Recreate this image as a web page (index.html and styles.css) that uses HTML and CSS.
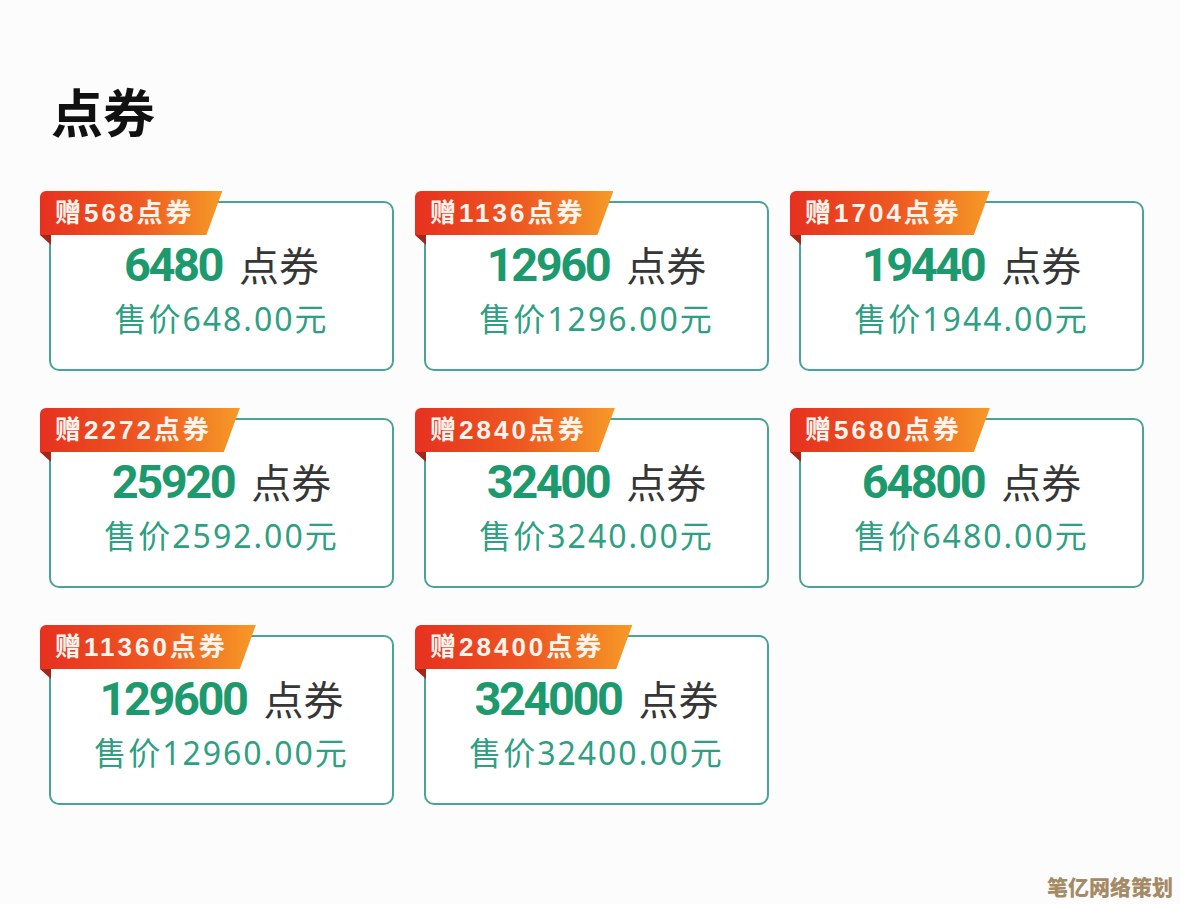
FILE: index.html
```html
<!DOCTYPE html>
<html lang="zh-CN">
<head>
<meta charset="utf-8">
<title>点券</title>
<link rel="stylesheet" href="styles.css">
</head>
<body>
<main class="page">
  <h1 class="title">点券</h1>
  <section class="grid">
    <div class="card">
      <div class="badge"><span class="badge-label">赠568点券</span></div>
      <div class="amount"><span class="num">6480</span><span class="unit">点券</span></div>
      <div class="price">售价648.00元</div>
    </div>
    <div class="card">
      <div class="badge"><span class="badge-label">赠1136点券</span></div>
      <div class="amount"><span class="num">12960</span><span class="unit">点券</span></div>
      <div class="price">售价1296.00元</div>
    </div>
    <div class="card">
      <div class="badge"><span class="badge-label">赠1704点券</span></div>
      <div class="amount"><span class="num">19440</span><span class="unit">点券</span></div>
      <div class="price">售价1944.00元</div>
    </div>
    <div class="card">
      <div class="badge"><span class="badge-label">赠2272点券</span></div>
      <div class="amount"><span class="num">25920</span><span class="unit">点券</span></div>
      <div class="price">售价2592.00元</div>
    </div>
    <div class="card">
      <div class="badge"><span class="badge-label">赠2840点券</span></div>
      <div class="amount"><span class="num">32400</span><span class="unit">点券</span></div>
      <div class="price">售价3240.00元</div>
    </div>
    <div class="card">
      <div class="badge"><span class="badge-label">赠5680点券</span></div>
      <div class="amount"><span class="num">64800</span><span class="unit">点券</span></div>
      <div class="price">售价6480.00元</div>
    </div>
    <div class="card">
      <div class="badge"><span class="badge-label">赠11360点券</span></div>
      <div class="amount"><span class="num">129600</span><span class="unit">点券</span></div>
      <div class="price">售价12960.00元</div>
    </div>
    <div class="card">
      <div class="badge"><span class="badge-label">赠28400点券</span></div>
      <div class="amount"><span class="num">324000</span><span class="unit">点券</span></div>
      <div class="price">售价32400.00元</div>
    </div>
  </section>
  <div class="watermark">笔亿网络策划</div>
</main>
</body>
</html>
```

FILE: styles.css
```css
html, body {
  margin: 0;
  padding: 0;
  background: #fcfcfd;
}

.page {
  position: relative;
  width: 1180px;
  height: 904px;
  box-sizing: border-box;
  padding: 85px 0 0 49px;
  font-family: "Noto Sans", "Noto Sans CJK SC", sans-serif;
  overflow: hidden;
}

.title {
  margin: 0 0 64px 2px;
  font-family: "Noto Sans CJK SC", sans-serif;
  font-size: 52px;
  line-height: 52px;
  font-weight: 700;
  color: #111;
}

.grid {
  display: grid;
  grid-template-columns: repeat(3, 345px);
  grid-auto-rows: 170px;
  column-gap: 30px;
  row-gap: 47px;
}

.card {
  position: relative;
  box-sizing: border-box;
  border: 2px solid #4aa493;
  border-radius: 10px;
  background: #fff;
  display: flex;
  flex-direction: column;
  align-items: center;
  padding-top: 37px;
}

.badge {
  position: absolute;
  left: -11px;
  top: -12px;
  height: 44px;
}

.badge::after {
  content: "";
  position: absolute;
  left: 0;
  top: 100%;
  width: 11px;
  height: 10px;
  background: #a3261a;
  clip-path: polygon(0 0, 100% 0, 100% 100%);
}

.badge-label {
  display: block;
  height: 44px;
  line-height: 44px;
  padding: 0 28px 0 15px;
  border-top-left-radius: 6px;
  background: linear-gradient(90deg, #e6311f 0%, #ee5a22 55%, #f69a27 100%);
  clip-path: polygon(0 0, 100% 0, calc(100% - 16px) 100%, 0 100%);
  color: #fff4ee;
  font-family: "Liberation Sans", "Noto Sans CJK SC", sans-serif;
  font-size: 26px;
  font-weight: 700;
  letter-spacing: 3px;
  white-space: nowrap;
}

.amount {
  display: flex;
  align-items: baseline;
  height: 48px;
  line-height: 48px;
}

.num {
  font-family: "Roboto", sans-serif;
  font-size: 47px;
  font-weight: 700;
  letter-spacing: -2.5px;
  color: #1d9a6d;
}

.unit {
  margin-left: 17px;
  font-family: "Noto Sans CJK SC", sans-serif;
  font-size: 40px;
  font-weight: 400;
  color: #363636;
}

.price {
  margin-top: 11px;
  height: 40px;
  line-height: 40px;
  font-size: 32px;
  letter-spacing: 2px;
  color: #2f9f83;
  white-space: nowrap;
}

.watermark {
  position: absolute;
  right: 7px;
  bottom: 4px;
  font-family: "Noto Sans CJK SC", sans-serif;
  font-size: 21px;
  line-height: 28px;
  font-weight: 900;
  color: #a58a66;
  letter-spacing: 0;
}
```
